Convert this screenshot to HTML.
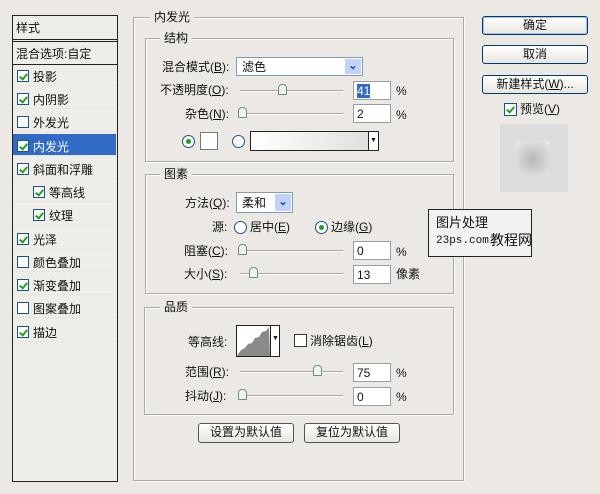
<!DOCTYPE html>
<html><head><meta charset="utf-8"><style>
*{margin:0;padding:0;box-sizing:border-box}
body{width:600px;height:494px;background:#ece9e4;font-family:"Liberation Sans","Noto Sans CJK SC",sans-serif;font-size:12px;color:#111;position:relative;overflow:hidden}
.a{position:absolute;white-space:nowrap;line-height:14px}
.cb{position:absolute;width:12px;height:12px;border:1px solid #1c5180;background:#fff}
.cb.k::after{content:"";position:absolute;left:3px;top:1px;width:3px;height:6px;border:solid #21a121;border-width:0 2px 2px 0;transform:rotate(40deg)}
.row{position:absolute;left:13px;width:103px;height:23px;border-bottom:1px solid #e8e6e0}
.row span{position:absolute;left:20px;top:5px}
.row .cb{left:4px;top:7px}
.grp{position:absolute;border:1px solid #a9a8a2;box-shadow:inset 1px 1px 0 #fff,1px 1px 0 #fff}
.lg{position:absolute;background:#ece9e4;padding:0 4px}
.in{position:absolute;width:38px;height:19px;background:#fff;border:1px solid #9a9ea4;padding:2px 3px;line-height:14px}
.tr{position:absolute;height:2px;border-top:1px solid #a6a6a6;border-bottom:1px solid #fff}
.th{position:absolute;width:9px;height:11px;background:#eef6ee;border:1px solid #6e8e72;border-radius:4px 4px 1px 1px}
.btn{position:absolute;border:1px solid #003c74;border-radius:3px;background:linear-gradient(#fff,#e8e6df);text-align:center;line-height:16px}
.rad{position:absolute;width:13px;height:13px;border-radius:50%;border:1px solid #1c5180;background:#fff}
.rad.k::after{content:"";position:absolute;left:3px;top:3px;width:5px;height:5px;border-radius:50%;background:#21a121}
.sel{position:absolute;background:#fff;border:1px solid #7f9db9;padding:2px 5px;line-height:14px}
.dd{position:absolute;right:1px;top:1px;bottom:1px;width:16px;background:#c1d3fb;color:#2d4a85;font-size:11px;font-weight:bold;text-align:center;line-height:14px}
</style></head><body>
<div style="position:absolute;left:12px;top:15px;width:106px;height:467px;border:1px solid #222;background:#efede8"></div>
<div class="a" style="left:16px;top:21px">样式</div>
<div style="position:absolute;left:12px;top:39px;width:106px;height:3px;border-top:1px solid #222;border-bottom:1px solid #222"></div>
<div class="a" style="left:16px;top:47px">混合选项:自定</div>
<div style="position:absolute;left:12px;top:64px;width:106px;border-top:1px solid #222"></div>
<div class="row" style="top:63px"><div class="cb k"></div><span>投影</span></div>
<div class="row" style="top:86px"><div class="cb k"></div><span>内阴影</span></div>
<div class="row" style="top:109px"><div class="cb"></div><span>外发光</span></div>
<div class="row" style="top:134px;height:22px;background:#316ac5;color:#fff"><div class="cb k" style="top:6px"></div><span style="top:4px">内发光</span></div>
<div class="row" style="top:156px"><div class="cb k"></div><span>斜面和浮雕</span></div>
<div class="row" style="top:179px"><div class="cb k" style="left:20px"></div><span style="left:36px">等高线</span></div>
<div class="row" style="top:202px"><div class="cb k" style="left:20px"></div><span style="left:36px">纹理</span></div>
<div class="row" style="top:226px"><div class="cb k"></div><span>光泽</span></div>
<div class="row" style="top:249px"><div class="cb"></div><span>颜色叠加</span></div>
<div class="row" style="top:272px"><div class="cb k"></div><span>渐变叠加</span></div>
<div class="row" style="top:295px"><div class="cb"></div><span>图案叠加</span></div>
<div class="row" style="top:319px"><div class="cb k"></div><span>描边</span></div>

<div class="grp" style="left:133px;top:17px;width:331px;height:464px"></div>
<div class="lg a" style="left:150px;top:10px">内发光</div>
<div class="grp" style="left:145px;top:38px;width:309px;height:124px"></div>
<div class="lg a" style="left:160px;top:31px">结构</div>
<div class="a" style="left:162px;top:60px">混合模式(<u>B</u>):</div>
<div class="sel" style="left:236px;top:57px;width:127px;height:19px">滤色<div class="dd">⌄</div></div>
<div class="a" style="left:160px;top:83px">不透明度(<u>O</u>):</div>
<div class="tr" style="left:240px;top:90px;width:103px"></div><div class="th" style="left:278px;top:84px"></div>
<div class="in" style="left:353px;top:81px"><span style="background:#316ac5;color:#fff">41</span></div><div class="a" style="left:396px;top:84px">%</div>
<div class="a" style="left:185px;top:107px">杂色(<u>N</u>):</div>
<div class="tr" style="left:240px;top:113px;width:103px"></div><div class="th" style="left:238px;top:107px"></div>
<div class="in" style="left:353px;top:104px">2</div><div class="a" style="left:396px;top:108px">%</div>
<div class="rad k" style="left:182px;top:135px"></div>
<div style="position:absolute;left:200px;top:132px;width:18px;height:18px;border:1px solid #777;background:#fff"></div>
<div class="rad" style="left:232px;top:135px"></div>
<div style="position:absolute;left:250px;top:131px;width:129px;height:20px;border:1px solid #222;background:linear-gradient(90deg,#fff,#f2f2f2 40%,#ddd)"><div style="position:absolute;right:0;top:0;width:10px;height:18px;border-left:1px solid #222;background:#fff;font-size:7px;text-align:center;line-height:18px">▼</div></div>

<div class="grp" style="left:145px;top:174px;width:309px;height:120px"></div>
<div class="lg a" style="left:160px;top:167px">图素</div>
<div class="a" style="left:185px;top:196px">方法(<u>Q</u>):</div>
<div class="sel" style="left:236px;top:192px;width:57px;height:21px;line-height:16px">柔和<div class="dd" style="line-height:16px">⌄</div></div>
<div class="a" style="left:212px;top:220px">源:</div>
<div class="rad" style="left:234px;top:221px"></div><div class="a" style="left:250px;top:220px">居中(<u>E</u>)</div>
<div class="rad k" style="left:315px;top:221px"></div><div class="a" style="left:331px;top:220px">边缘(<u>G</u>)</div>
<div class="a" style="left:184px;top:244px">阻塞(<u>C</u>):</div>
<div class="tr" style="left:240px;top:250px;width:103px"></div><div class="th" style="left:238px;top:244px"></div>
<div class="in" style="left:353px;top:241px">0</div><div class="a" style="left:396px;top:245px">%</div>
<div class="a" style="left:184px;top:267px">大小(<u>S</u>):</div>
<div class="tr" style="left:240px;top:273px;width:103px"></div><div class="th" style="left:249px;top:267px"></div>
<div class="in" style="left:353px;top:265px">13</div><div class="a" style="left:396px;top:267px">像素</div>

<div class="grp" style="left:144px;top:307px;width:310px;height:108px"></div>
<div class="lg a" style="left:160px;top:300px">品质</div>
<div class="a" style="left:188px;top:335px">等高线:</div>
<div style="position:absolute;left:236px;top:325px;width:44px;height:32px;border:1px solid #222;background:#fff;overflow:hidden">
<svg width="33" height="30" style="position:absolute;left:0;top:0"><path d="M0 30 L4 24 L8 22 L11 18 L15 17 L18 12 L22 11 L25 6 L29 5 L32 1 L33 30Z" fill="#8a8a8a"/></svg>
<div style="position:absolute;left:33px;top:0;width:10px;height:30px;border-left:1px solid #222;font-size:7px;text-align:center;line-height:26px">▼</div></div>
<div class="cb" style="left:294px;top:334px;width:13px;height:13px;border-color:#333"></div>
<div class="a" style="left:310px;top:334px">消除锯齿(<u>L</u>)</div>
<div class="a" style="left:185px;top:365px">范围(<u>R</u>):</div>
<div class="tr" style="left:240px;top:371px;width:103px"></div><div class="th" style="left:313px;top:365px"></div>
<div class="in" style="left:353px;top:363px">75</div><div class="a" style="left:396px;top:366px">%</div>
<div class="a" style="left:185px;top:389px">抖动(<u>J</u>):</div>
<div class="tr" style="left:240px;top:395px;width:103px"></div><div class="th" style="left:238px;top:389px"></div>
<div class="in" style="left:353px;top:387px">0</div><div class="a" style="left:396px;top:390px">%</div>
<div class="btn" style="left:198px;top:423px;width:96px;height:20px;border-color:#555">设置为默认值</div>
<div class="btn" style="left:304px;top:423px;width:96px;height:20px;border-color:#555">复位为默认值</div>

<div class="btn" style="left:482px;top:16px;width:106px;height:19px;box-shadow:inset 0 0 0 1px #a8c0e8">确定</div>
<div class="btn" style="left:482px;top:45px;width:106px;height:19px">取消</div>
<div class="btn" style="left:482px;top:75px;width:106px;height:19px">新建样式(<u>W</u>)...</div>
<div class="cb k" style="left:504px;top:103px;width:13px;height:13px"></div>
<div class="a" style="left:520px;top:102px">预览(<u>V</u>)</div>
<div style="position:absolute;left:500px;top:124px;width:68px;height:68px;background:#dcdcdc"></div>
<div style="position:absolute;left:516px;top:141px;width:34px;height:34px;background:radial-gradient(circle at 50% 55%,#b8b8b8,#d4d4d4 55%,#ececec)"></div>

<div style="position:absolute;left:428px;top:209px;width:104px;height:48px;border:1px solid #222;background:#f2f2f2"></div>
<div class="a" style="left:436px;top:216px;font-size:13px">图片处理</div>
<div class="a" style="left:436px;top:234px;font-family:'Liberation Mono',monospace;font-size:11px">23ps.com</div>
<div class="a" style="left:490px;top:233px;font-size:14px">教程网</div>
</body></html>
